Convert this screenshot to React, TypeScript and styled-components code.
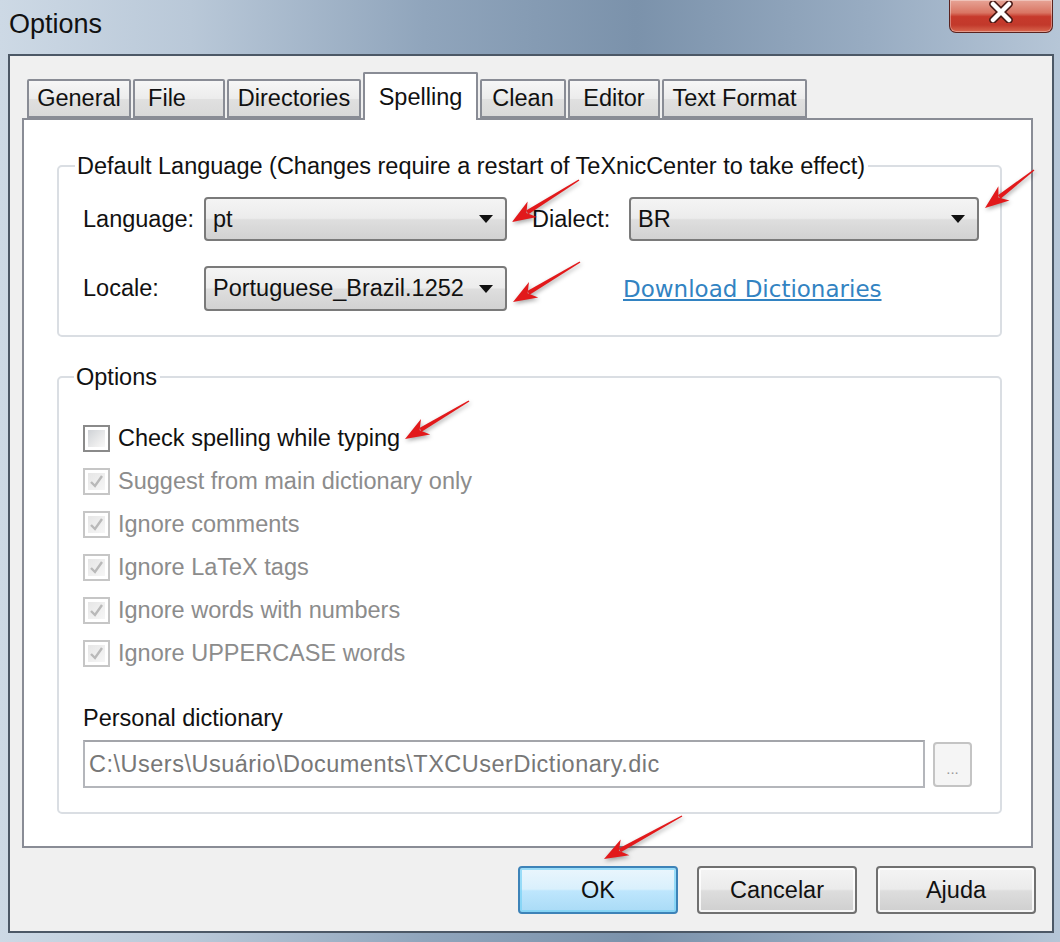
import styled, { createGlobalStyle } from 'styled-components';

const GlobalStyle = createGlobalStyle`
  html, body {
    margin: 0;
    padding: 0;
  }
  body {
    width: 1060px;
    height: 942px;
    overflow: hidden;
    font-family: "Liberation Sans", Arial, sans-serif;
  }
`;

type Arrow = { x1: number; y1: number; x2: number; y2: number };

// red annotation arrows drawn on top of the screenshot
const arrows: Arrow[] = [
  { x1: 579, y1: 180, x2: 512, y2: 222 },
  { x1: 1034, y1: 170, x2: 985, y2: 208 },
  { x1: 580, y1: 262, x2: 513, y2: 302 },
  { x1: 469, y1: 401, x2: 405, y2: 439 },
  { x1: 682, y1: 816, x2: 604, y2: 859 },
];

const tabs = [
  { label: 'General', width: 104 },
  { label: 'File', width: 92, pad: 24 },
  { label: 'Directories', width: 134 },
  { label: 'Spelling', width: 115, active: true },
  { label: 'Clean', width: 86 },
  { label: 'Editor', width: 92 },
  { label: 'Text Format', width: 145 },
];

const checks = [
  { label: 'Check spelling while typing', checked: false, disabled: false },
  { label: 'Suggest from main dictionary only', checked: true, disabled: true },
  { label: 'Ignore comments', checked: true, disabled: true },
  { label: 'Ignore LaTeX tags', checked: true, disabled: true },
  { label: 'Ignore words with numbers', checked: true, disabled: true },
  { label: 'Ignore UPPERCASE words', checked: true, disabled: true },
];

function arrowShapes({ x1, y1, x2, y2 }: Arrow) {
  const dx = x2 - x1;
  const dy = y2 - y1;
  const len = Math.hypot(dx, dy);
  const ux = dx / len;
  const uy = dy / len;
  const nx = -uy;
  const ny = ux;
  const headLen = 22;
  const headW = 9;
  const bx = x2 - ux * headLen;
  const by = y2 - uy * headLen;
  const p = (x: number, y: number) => `${x.toFixed(1)},${y.toFixed(1)}`;
  const shaft = [
    p(x1 + nx * 0.7, y1 + ny * 0.7),
    p(bx + ux * 4 + nx * 2.2, by + uy * 4 + ny * 2.2),
    p(bx + ux * 4 - nx * 2.2, by + uy * 4 - ny * 2.2),
    p(x1 - nx * 0.7, y1 - ny * 0.7),
  ].join(' ');
  const head = [
    p(x2, y2),
    p(bx + nx * headW - ux * 2, by + ny * headW - uy * 2),
    p(bx + ux * 5, by + uy * 5),
    p(bx - nx * headW - ux * 2, by - ny * headW - uy * 2),
  ].join(' ');
  return { shaft, head };
}

function DropArrow() {
  return (
    <svg width="14" height="8" viewBox="0 0 14 8">
      <path d="M0 0 H14 L7 8 Z" fill="#111" />
    </svg>
  );
}

function CheckMark() {
  return (
    <svg width="15" height="15" viewBox="0 0 15 15">
      <path d="M2 8 L6 12 L13 2" fill="none" stroke="#b9b9b9" strokeWidth="2.4" />
    </svg>
  );
}

export default function App() {
  return (
    <>
      <GlobalStyle />
      <Window>
        <TitleBar>
          <Title>Options</Title>
          <CloseButton>
            <svg width="26" height="22" viewBox="0 0 26 22">
              <path d="M5 3 L21 19 M21 3 L5 19" stroke="#4a1a16" strokeWidth="7.5" strokeLinecap="round" />
              <path d="M5 3 L21 19 M21 3 L5 19" stroke="#fff" strokeWidth="4.5" strokeLinecap="round" />
            </svg>
          </CloseButton>
        </TitleBar>

        <Client>
          <TabStrip>
            {tabs.map(t => (
              <Tab key={t.label} $width={t.width} $active={!!t.active} $pad={t.pad ?? 0}>
                {t.label}
              </Tab>
            ))}
          </TabStrip>

          <Panel>
            <Group $padRight={21}>
              <Legend $shift={-8}>Default Language (Changes require a restart of TeXnicCenter to take effect)</Legend>
              <LangGrid>
                <FieldLabel>Language:</FieldLabel>
                <Select>
                  <span>pt</span>
                  <DropArrow />
                </Select>
                <span />
                <FieldLabel>Dialect:</FieldLabel>
                <Select>
                  <span>BR</span>
                  <DropArrow />
                </Select>

                <FieldLabel>Locale:</FieldLabel>
                <Select>
                  <span>Portuguese_Brazil.1252</span>
                  <DropArrow />
                </Select>
                <DownloadLink href="#">Download Dictionaries</DownloadLink>
              </LangGrid>
            </Group>

            <Group $padRight={28} $gapTop>
              <Legend $shift={-9}>Options</Legend>
              <CheckList>
                {checks.map(c => (
                  <CheckRow key={c.label} $disabled={c.disabled}>
                    <CheckBox $disabled={c.disabled}>
                      <CheckFill $disabled={c.disabled}>{c.checked && <CheckMark />}</CheckFill>
                    </CheckBox>
                    {c.label}
                  </CheckRow>
                ))}
              </CheckList>

              <DictLabel>Personal dictionary</DictLabel>
              <DictRow>
                <DictInput>C:\Users\Usuário\Documents\TXCUserDictionary.dic</DictInput>
                <BrowseButton>...</BrowseButton>
              </DictRow>
            </Group>
          </Panel>

          <ButtonRow>
            <DialogButton $primary>OK</DialogButton>
            <DialogButton>Cancelar</DialogButton>
            <DialogButton>Ajuda</DialogButton>
          </ButtonRow>
        </Client>

        <Overlay width="1060" height="942" viewBox="0 0 1060 942">
          {arrows.map((a, i) => {
            const { shaft, head } = arrowShapes(a);
            return (
              <g key={i}>
                <polygon points={shaft} fill="#e2191b" />
                <polygon points={head} fill="#e2191b" />
              </g>
            );
          })}
        </Overlay>
      </Window>
    </>
  );
}

const Window = styled.div`
  position: relative;
  width: 1060px;
  height: 942px;
  box-sizing: border-box;
  display: flex;
  flex-direction: column;
  padding: 0 6px 9px 8px;
  background: linear-gradient(
    90deg,
    #cdd9e5 0%,
    #b9c8d8 18%,
    #90a5bc 40%,
    #7b92ab 60%,
    #98acc2 82%,
    #b6c6d7 100%
  );
`;

const TitleBar = styled.div`
  height: 54px;
  flex: none;
  display: flex;
  justify-content: space-between;
  align-items: flex-start;
`;

const Title = styled.div`
  margin: 9px 0 0 1px;
  font-size: 27px;
  line-height: 31px;
  color: #111;
`;

const CloseButton = styled.div`
  width: 104px;
  height: 33px;
  box-sizing: border-box;
  margin-right: 1px;
  border: 1px solid #5a221e;
  border-top: none;
  border-radius: 0 0 7px 7px;
  display: flex;
  justify-content: center;
  align-items: flex-start;
  padding-top: 1px;
  background: linear-gradient(180deg, #e7a496 0%, #d97563 40%, #c73a2c 52%, #c2392b 78%, #d8674f 100%);
  box-shadow: inset 0 0 0 1px rgba(255, 255, 255, 0.35);
`;

const Client = styled.div`
  flex: 1;
  display: flex;
  flex-direction: column;
  background: #f0f0f0;
  border: 2px solid #4c5866;
  padding: 16px 19px 17px 12px;
`;

const TabStrip = styled.div`
  display: flex;
  align-items: flex-end;
  gap: 2px;
  height: 46px;
  padding-left: 5px;
  flex: none;
`;

const Tab = styled.div<{ $width: number; $active: boolean; $pad: number }>`
  position: relative;
  z-index: ${p => (p.$active ? 2 : 0)};
  width: ${p => p.$width}px;
  height: ${p => (p.$active ? 48 : 39)}px;
  margin-bottom: ${p => (p.$active ? -2 : 0)}px;
  box-sizing: border-box;
  display: flex;
  align-items: center;
  justify-content: center;
  padding-right: ${p => p.$pad}px;
  border: 2px solid #898c95;
  border-bottom: ${p => (p.$active ? 'none' : '2px solid #898c95')};
  border-radius: 2px 2px 0 0;
  font-size: 23.5px;
  color: #111;
  background: ${p =>
    p.$active ? '#fff' : 'linear-gradient(180deg, #f6f6f6 0%, #ececec 50%, #e0e0e0 51%, #d9d9d9 100%)'};
`;

const Panel = styled.div`
  position: relative;
  z-index: 1;
  flex: 1;
  background: #fff;
  border: 2px solid #898c95;
  padding: 32px 29px 0 33px;
  display: flex;
  flex-direction: column;
`;

const Group = styled.fieldset<{ $padRight: number; $gapTop?: boolean }>`
  margin: ${p => (p.$gapTop ? '26px' : '0')} 0 0 0;
  padding: 17px ${p => p.$padRight}px 24px 24px;
  border: 2px solid #dadee3;
  border-radius: 5px;
  min-width: 0;
`;

const Legend = styled.legend<{ $shift: number }>`
  margin-left: ${p => p.$shift}px;
  padding: 0 3px 0 2px;
  font-size: 23.5px;
  line-height: 28px;
  color: #111;
`;

const LangGrid = styled.div`
  display: grid;
  grid-template-columns: 121px 303px 25px 97px 350px;
  grid-template-rows: 44px 45px;
  row-gap: 25px;
  align-items: center;
`;

const FieldLabel = styled.span`
  font-size: 23.5px;
  color: #111;
`;

const Select = styled.div`
  height: 100%;
  box-sizing: border-box;
  display: flex;
  align-items: center;
  justify-content: space-between;
  padding: 0 12px 0 7px;
  border: 2px solid #7a7a7a;
  border-radius: 4px;
  font-size: 23.5px;
  color: #111;
  background: linear-gradient(180deg, #f4f4f4 0%, #ececec 48%, #dedede 52%, #d2d2d2 100%);
`;

const DownloadLink = styled.a`
  grid-column: 5;
  margin-left: -6px;
  font-family: "DejaVu Sans", Verdana, sans-serif;
  font-size: 23px;
  color: #3283c2;
  text-decoration: underline;
  white-space: nowrap;
`;

const CheckList = styled.div`
  display: flex;
  flex-direction: column;
  padding-top: 9px;
`;

const CheckRow = styled.div<{ $disabled: boolean }>`
  height: 43px;
  display: flex;
  align-items: center;
  gap: 8px;
  font-size: 23.5px;
  color: ${p => (p.$disabled ? '#8c8c8c' : '#111')};
`;

const CheckBox = styled.span<{ $disabled: boolean }>`
  width: 27px;
  height: 27px;
  box-sizing: border-box;
  flex: none;
  display: flex;
  padding: 3px;
  background: #fff;
  border: 2px solid ${p => (p.$disabled ? '#c6c6c6' : '#8a8a8a')};
`;

const CheckFill = styled.span<{ $disabled: boolean }>`
  flex: 1;
  display: flex;
  align-items: center;
  justify-content: center;
  background: ${p =>
    p.$disabled
      ? 'linear-gradient(135deg, #e6e6e6 0%, #f6f6f6 100%)'
      : 'linear-gradient(135deg, #cfd2d6 0%, #eeeeee 70%, #f8f8f8 100%)'};
`;

const DictLabel = styled.div`
  margin-top: 29px;
  font-size: 23.5px;
  line-height: 28px;
  color: #111;
`;

const DictRow = styled.div`
  margin-top: 8px;
  display: flex;
  align-items: center;
  gap: 8px;
`;

const DictInput = styled.div`
  flex: 1;
  height: 48px;
  box-sizing: border-box;
  display: flex;
  align-items: center;
  padding-left: 4px;
  border: 2px solid #b4b6bb;
  border-top-color: #a3a5aa;
  background: #fff;
  font-size: 23.5px;
  letter-spacing: 0.5px;
  color: #777;
  white-space: nowrap;
`;

const BrowseButton = styled.div`
  width: 39px;
  height: 45px;
  box-sizing: border-box;
  flex: none;
  display: flex;
  justify-content: center;
  align-items: center;
  padding-top: 8px;
  border: 2px solid #c4c4c4;
  border-radius: 4px;
  background: #f5f5f5;
  font-size: 15px;
  color: #999;
`;

const ButtonRow = styled.div`
  flex: none;
  display: flex;
  justify-content: flex-end;
  gap: 19px;
  margin: 18px -3px 0 0;
`;

const DialogButton = styled.div<{ $primary?: boolean }>`
  width: 160px;
  height: 48px;
  box-sizing: border-box;
  display: flex;
  justify-content: center;
  align-items: center;
  border: 2px solid ${p => (p.$primary ? '#3d83b8' : '#707070')};
  border-radius: 4px;
  font-size: 23.5px;
  color: #111;
  box-shadow: inset 0 0 0 2px ${p => (p.$primary ? 'rgba(120, 210, 245, 0.7)' : 'rgba(255, 255, 255, 0.8)')};
  background: ${p =>
    p.$primary
      ? 'linear-gradient(180deg, #eaf6fd 0%, #d9f0fc 48%, #bee6fd 52%, #a9dbf6 100%)'
      : 'linear-gradient(180deg, #f4f4f4 0%, #ebebeb 48%, #dddddd 52%, #cfcfcf 100%)'};
`;

const Overlay = styled.svg`
  position: absolute;
  top: 0;
  left: 0;
  pointer-events: none;
  z-index: 5;
  filter: drop-shadow(1px 2px 2px rgba(0, 0, 0, 0.35));
`;
